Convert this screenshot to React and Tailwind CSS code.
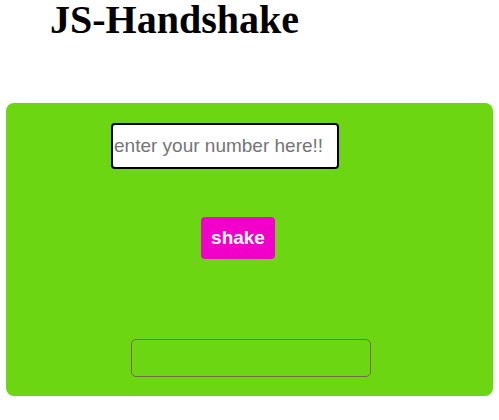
export default function App() {
  return (
    <div className="w-[499px] h-[420px] bg-white overflow-hidden">
      <div className="h-[103px] pt-[1px]">
        <h1 className="pl-[50px] -mt-[3px] text-[40px] leading-[44px] font-bold text-black font-['Liberation_Serif',serif]">
          JS-Handshake
        </h1>
      </div>

      <div className="mx-[6px] h-[293px] rounded-[8px] bg-[#6bd611] flex flex-col">
        <div className="mt-[20px] ml-[105px]">
          <input
            type="text"
            placeholder="enter your number here!!"
            className="w-[228px] h-[46px] bg-white border-2 border-black rounded-[4px] px-[1px] text-[19px] font-['Liberation_Sans',sans-serif] text-black placeholder:text-[#757575] outline-none"
          />
        </div>

        <div className="mt-[48px] ml-[195px]">
          <button className="w-[74px] h-[42px] bg-[#f000c8] text-white rounded-[4px] text-[19px] font-bold font-['Liberation_Sans',sans-serif]">
            shake
          </button>
        </div>

        <div className="mt-[80px] ml-[125px] w-[240px] h-[38px] border border-[#7a6a4a] rounded-[5px]" />
      </div>
    </div>
  )
}
